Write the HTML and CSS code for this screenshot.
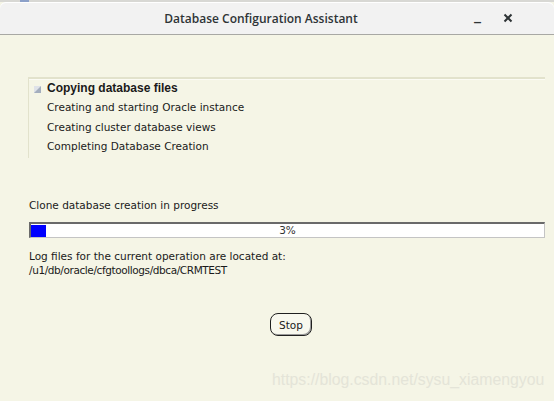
FILE: index.html
```html
<!DOCTYPE html>
<html>
<head>
<meta charset="utf-8">
<link rel="stylesheet" href="styles.css">
</head>
<body>
<div class="strip"><span class="strip-tab"></span></div>
<div class="window">
  <div class="titlebar">
    <span class="title">Database Configuration Assistant</span>
    <span class="tb-btn tb-min">_</span>
    <span class="tb-btn tb-close">
      <svg width="10" height="10" viewBox="0 0 10 10"><path d="M1.5 1.5 L8.5 8.5 M8.5 1.5 L1.5 8.5" stroke="#2e3436" stroke-width="2"/></svg>
    </span>
  </div>
  <div class="content">
    <div class="steps">
      <div class="step current"><svg class="step-icon" width="7" height="7" viewBox="0 0 7 7"><rect width="7" height="7" fill="#dfe2e8"/><path d="M7 0 L7 7 L0 7 Z" fill="#a4aebe"/></svg>Copying database files</div>
      <div class="step">Creating and starting Oracle instance</div>
      <div class="step">Creating cluster database views</div>
      <div class="step">Completing Database Creation</div>
    </div>
    <div class="status">Clone database creation in progress</div>
    <div class="progress">
      <div class="progress-fill" style="width:15px"></div>
      <span class="progress-label">3%</span>
    </div>
    <div class="log">Log files for the current operation are located at:<br><span class="log-path">/u1/db/oracle/cfgtoollogs/dbca/CRMTEST</span></div>
    <div class="actions"><button class="stop">Stop</button></div>
    <div class="watermark">https://blog.csdn.net/sysu_xiamengyou</div>
  </div>
</div>
</body>
</html>
```
FILE: styles.css
```css
html, body {
  margin: 0;
  padding: 0;
  background: #f5f5e6;
}
body {
  width: 554px;
  height: 401px;
  overflow: hidden;
  font-family: "DejaVu Sans", "Liberation Sans", sans-serif;
}
.strip {
  height: 2px;
  background: #d8d8d4;
}
.strip-tab {
  display: block;
  margin-left: 20px;
  width: 9px;
  height: 2px;
  background: #8ca0c8;
}
.window {
  height: 399px;
  background: #f5f5e6;
  display: flex;
  flex-direction: column;
}
.titlebar {
  height: 32px;
  background: #f2f2f2;
  border-top-left-radius: 6px;
  border-top-right-radius: 6px;
  border-bottom: 1px solid #a8a8a4;
  display: flex;
  align-items: center;
  position: relative;
  box-shadow: inset 0 1px 0 #ffffff;
}
.title {
  flex: 1;
  text-align: center;
  font-family: "Open Sans", "DejaVu Sans", sans-serif;
  font-weight: 600;
  font-size: 12px;
  color: #2e3436;
  padding-right: 32px;
}
.tb-btn {
  position: absolute;
  top: 0;
  height: 32px;
  display: flex;
  align-items: center;
  color: #2e3436;
}
.tb-min {
  left: 474px;
  font-weight: bold;
  font-size: 14px;
  top: -3px;
}
.tb-close {
  left: 503px;
}
.content {
  flex: 1;
  position: relative;
  padding: 42px 9px 0 29px;
  font-size: 11px;
  color: #1a1a1a;
}
.steps {
  margin-left: -1px;
  border-top: 2px solid #e2e2cc;
  border-left: 1px solid #e2e2cc;
  box-shadow: inset 0 1px 0 #fbfbf4;
  padding: 0 0 2px 18px;
}
.step {
  height: 19.3px;
  line-height: 19.3px;
  white-space: nowrap;
  font-size: 10.5px;
}
.step.current {
  font-family: "Liberation Sans", Arial, sans-serif;
  font-weight: bold;
  font-size: 12px;
}
.step-icon {
  margin-left: -13px;
  margin-right: 6px;
  vertical-align: -1px;
}
.status {
  margin-top: 40px;
  line-height: 14px;
  font-size: 10.5px;
}
.progress {
  margin-top: 10px;
  height: 13px;
  border-top: 2px solid #6a6a6a;
  border-left: 2px solid #6a6a6a;
  border-right: 1px solid #c4c4c4;
  border-bottom: 1px solid #c4c4c4;
  background: #ffffff;
  position: relative;
  width: 513px;
}
.progress-fill {
  height: 12px;
  margin-top: 1px;
  background: #0000ff;
}
.progress-label {
  position: absolute;
  left: 0;
  right: 0;
  top: 0;
  text-align: center;
  line-height: 13px;
  font-size: 10.5px;
  color: #333;
}
.log {
  margin-top: 11px;
  line-height: 14px;
  font-size: 10.5px;
}
.log-path {
  letter-spacing: -0.4px;
}
.actions {
  display: flex;
  justify-content: center;
  margin-top: 36px;
  padding-left: 8px;
}
.stop {
  font-family: "DejaVu Sans", sans-serif;
  font-size: 10.5px;
  color: #1a1a1a;
  background: #f8f8ee;
  border: 1px solid #202020;
  border-radius: 8px;
  box-shadow: inset -1px -1px 0 #9a9a9a;
  width: 42px;
  height: 23px;
  padding: 0;
}
.watermark {
  position: absolute;
  left: 272px;
  top: 336px;
  font-family: "Liberation Sans", Arial, sans-serif;
  font-size: 15.8px;
  color: #e4e4d8;
  white-space: nowrap;
}
```
